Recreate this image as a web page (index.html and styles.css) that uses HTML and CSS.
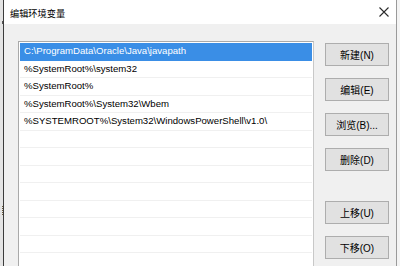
FILE: index.html
```html
<!DOCTYPE html>
<html lang="zh-CN">
<head>
<meta charset="utf-8">
<title>编辑环境变量</title>
<link rel="stylesheet" href="styles.css">
</head>
<body>
<div class="screen">
  <div class="edge-left">
    <span class="tick tick-top"></span>
    <span class="tick tick-low"></span>
  </div>
  <div class="edge-line"></div>
  <div class="dialog">
    <div class="titlebar">
      <span class="title">编辑环境变量</span>
      <span class="close">
        <svg width="10" height="10" viewBox="0 0 10 10"><path d="M0.5 0.5 L9.5 9.5 M9.5 0.5 L0.5 9.5" stroke="#2b2b2b" stroke-width="1.1" fill="none"/></svg>
      </span>
    </div>
    <div class="content">
      <div class="list">
        <div class="row selected">C:\ProgramData\Oracle\Java\javapath</div>
        <div class="row">%SystemRoot%\system32</div>
        <div class="row">%SystemRoot%</div>
        <div class="row">%SystemRoot%\System32\Wbem</div>
        <div class="row">%SYSTEMROOT%\System32\WindowsPowerShell\v1.0\</div>
        <div class="row"></div>
        <div class="row"></div>
        <div class="row"></div>
        <div class="row"></div>
        <div class="row"></div>
        <div class="row"></div>
        <div class="row"></div>
        <div class="row"></div>
      </div>
      <div class="buttons">
        <button class="btn">新建(N)</button>
        <button class="btn">编辑(E)</button>
        <button class="btn">浏览(B)...</button>
        <button class="btn">删除(D)</button>
        <button class="btn gap-top">上移(U)</button>
        <button class="btn">下移(O)</button>
      </div>
    </div>
  </div>
  <div class="edge-right"></div>
</div>
</body>
</html>
```
FILE: styles.css
```css
html, body {
  margin: 0;
  padding: 0;
}
body {
  width: 400px;
  height: 266px;
  overflow: hidden;
  background: #f0f0f0;
  font-family: "Liberation Sans", "Noto Sans CJK SC", sans-serif;
}
.screen {
  display: flex;
  height: 266px;
  overflow: hidden;
}
.edge-left {
  width: 3px;
  flex-shrink: 0;
  background: #e4e4e4;
  display: flex;
  flex-direction: column;
  align-items: flex-end;
}
.tick {
  width: 1px;
  background: #555;
}
.tick-top {
  margin-top: 21px;
  height: 3px;
}
.tick-low {
  margin-top: 182px;
  height: 10px;
  background: repeating-linear-gradient(to bottom, #6a5a3a 0 1px, #e4e4e4 1px 2px);
}
.edge-line {
  width: 1px;
  flex-shrink: 0;
  background: #3c3c3c;
}
.edge-right {
  width: 3px;
  flex-shrink: 0;
  border-left: 1px solid #9a9a9a;
  background: #f4f4f4;
}
.dialog {
  flex: 1;
  display: flex;
  flex-direction: column;
  background: #f0f0f0;
  overflow: hidden;
}
.titlebar {
  height: 24px;
  flex-shrink: 0;
  background: #fff;
  display: flex;
  align-items: center;
  justify-content: space-between;
  padding: 0 7px 0 6px;
}
.title {
  font-family: "Noto Sans CJK SC", sans-serif;
  font-size: 9.2px;
  color: #000;
  margin-top: 1px;
}
.close {
  display: flex;
  margin-top: -1px;
}
.content {
  display: flex;
  padding: 17px 0 0 14px;
  gap: 11px;
  flex-shrink: 0;
}
.list {
  width: 292px;
  border: 1px solid #a9a9a9;
  border-right-color: #c8c8c8;
  background: #fff;
  padding: 1px 1px 0 1px;
  height: 240px;
}
.row {
  height: 17.5px;
  box-sizing: border-box;
  border-bottom: 1px solid #f0f0f0;
  font-size: 9.6px;
  line-height: 16.5px;
  padding-left: 4px;
  color: #000;
  white-space: nowrap;
}
.row.selected {
  background: #3a8ee6;
  color: #fff;
  border-bottom-color: #3a8ee6;
}
.buttons {
  display: flex;
  flex-direction: column;
  gap: 12px;
  padding-top: 2px;
}
.btn {
  width: 64px;
  height: 23px;
  box-sizing: border-box;
  background: #e1e1e1;
  border: 1px solid #adadad;
  font-family: "Liberation Sans", "Noto Sans CJK SC", sans-serif;
  font-size: 10px;
  color: #000;
  padding: 0;
  margin: 0;
}
.btn.gap-top {
  margin-top: 18px;
}
```
